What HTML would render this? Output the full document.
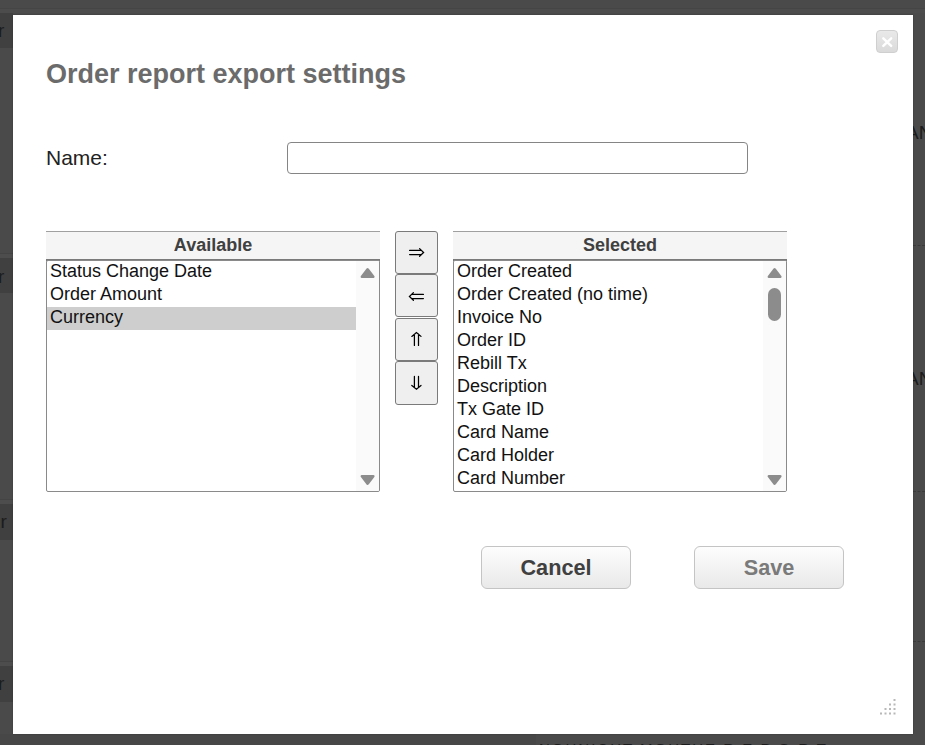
<!DOCTYPE html>
<html><head><meta charset="utf-8">
<style>
html,body{margin:0;padding:0;}
body{width:925px;height:745px;overflow:hidden;position:relative;background:#4a4a4a;font-family:"Liberation Sans",sans-serif;}
.abs{position:absolute;}
.bgt{font-size:19px;color:#1c1c1c;line-height:22px;white-space:nowrap;}
.band{position:absolute;left:0;width:13px;background:#404040;}
.bl{position:absolute;left:0;width:13px;height:1px;background:#444;}
.ls{position:absolute;left:0;width:13px;height:4px;background:#4d4d4d;}
.dlg{position:absolute;left:13px;top:15px;width:900px;height:719px;background:#fff;box-shadow:0 0 1.5px rgba(0,0,0,0.3);}
.title{position:absolute;left:46px;top:58.5px;font-size:27px;font-weight:bold;color:#6b6b6b;white-space:nowrap;line-height:31px;}
.lbl{position:absolute;left:46px;top:146px;font-size:21px;color:#222;line-height:23px;}
.inp{position:absolute;left:287px;top:142px;width:459px;height:30px;border:1px solid #858585;border-radius:4px;background:#fff;}
.hdr{position:absolute;top:231px;width:334px;height:27px;background:#f5f5f5;border-top:1px solid #a0a0a0;border-bottom:2px solid #7a7a7a;font-size:18px;font-weight:bold;color:#404040;text-align:center;line-height:27px;}
.list{position:absolute;top:260px;width:332px;height:230px;border:1px solid #8a8a8a;border-radius:2px;background:#fff;overflow:hidden;}
.item{position:absolute;left:3px;height:23px;font-size:18px;line-height:21px;color:#111;white-space:nowrap;}
.sb{position:absolute;right:0;top:0;width:23px;height:230px;background:#fafafa;}
.abtn{position:absolute;left:395px;width:41px;height:41px;border:1px solid #7a7a7a;border-radius:3px;background:#efefef;}
.btn{position:absolute;top:546px;width:148px;height:41px;border:1px solid #c4c4c4;border-radius:6px;background:linear-gradient(#fdfdfd,#e9e9e9);font-size:21.7px;font-weight:bold;text-align:center;line-height:42px;}
</style></head><body>
<div class="band" style="top:13px;height:35px;"></div>
<div class="band" style="top:258px;height:35px;"></div>
<div class="band" style="top:504px;height:36px;"></div>
<div class="band" style="top:666px;height:36px;"></div>

<div class="abs" style="left:0;top:8px;width:925px;height:1px;background:#454545;"></div><div class="abs" style="left:0;top:9px;width:925px;height:4px;background:#4c4c4c;"></div><div class="bl" style="top:253px;"></div><div class="ls" style="top:254px;"></div><div class="bl" style="top:499px;"></div><div class="ls" style="top:500px;"></div><div class="bl" style="top:661px;"></div><div class="ls" style="top:662px;"></div>
<div class="abs bgt" style="left:-2px;top:20px;">r</div>
<div class="abs bgt" style="left:-2px;top:266px;">r</div>
<div class="abs bgt" style="left:0.5px;top:511px;">r</div>
<div class="abs bgt" style="left:-2px;top:673px;">r</div>
<div class="abs bgt" style="left:906px;top:122px;">AN</div>
<div class="abs bgt" style="left:906px;top:368px;">AN</div>
<div class="abs" style="left:913px;top:245px;width:12px;height:0;border-top:1px dashed #3a3a3a;"></div>
<div class="abs" style="left:913px;top:491px;width:12px;height:0;border-top:1px dashed #3a3a3a;"></div>
<div class="abs" style="left:913px;top:641px;width:12px;height:0;border-top:1px dashed #3a3a3a;"></div>
<div class="abs" style="left:0;top:734px;width:536px;height:11px;background:#474747;"></div>
<div class="abs bgt" style="left:539px;top:737.5px;font-size:15px;letter-spacing:2px;">NOHNICHT MOHTHE R E P O R T</div>
<div class="dlg"></div>
<div class="title">Order report export settings</div>
<div class="lbl">Name:</div>
<div class="inp"></div>

<div class="hdr" style="left:46px;">Available</div>
<div class="list" style="left:46px;">
  <div class="item" style="top:0px;">Status Change Date</div>
  <div class="item" style="top:23px;">Order Amount</div>
  <div class="abs" style="left:0;top:46px;width:309px;height:23px;background:#cecece;"></div>
  <div class="item" style="top:46px;">Currency</div>
  <div class="sb"></div>
</div>

<div class="abtn" style="top:231px;"></div>
<div class="abtn" style="top:274px;"></div>
<div class="abtn" style="top:318px;"></div>
<div class="abtn" style="top:361px;height:42px;"></div>

<div class="hdr" style="left:453px;">Selected</div>
<div class="list" style="left:453px;">
  <div class="item" style="top:0px;">Order Created</div>
  <div class="item" style="top:23px;">Order Created (no time)</div>
  <div class="item" style="top:46px;">Invoice No</div>
  <div class="item" style="top:69px;">Order ID</div>
  <div class="item" style="top:92px;">Rebill Tx</div>
  <div class="item" style="top:115px;">Description</div>
  <div class="item" style="top:138px;">Tx Gate ID</div>
  <div class="item" style="top:161px;">Card Name</div>
  <div class="item" style="top:184px;">Card Holder</div>
  <div class="item" style="top:207px;">Card Number</div>
  <div class="sb"></div>
</div>

<div class="btn" style="left:481px;color:#404040;">Cancel</div>
<div class="btn" style="left:694px;color:#7a7a7a;">Save</div>

<div class="abs" style="left:876px;top:30px;width:20px;height:21px;border:1px solid #cfcfcf;border-radius:4px;background:linear-gradient(#e9e9e9,#dadada);"></div>

<svg class="abs" style="left:0;top:0;" width="925" height="745" viewBox="0 0 925 745">
 <g fill="#8c8c8c" stroke="#8c8c8c" stroke-width="2.6" stroke-linejoin="round">
  <path d="M367.6,269.4 L373.3,276.7 L361.9,276.7 Z"/>
  <path d="M367.6,483.6 L373.3,476.3 L361.9,476.3 Z"/>
  <path d="M774.6,269.4 L780.3,276.7 L768.9,276.7 Z"/>
  <path d="M774.6,483.6 L780.3,476.3 L768.9,476.3 Z"/>
 </g>
 <rect x="768" y="288" width="13" height="33" rx="6.5" fill="#8c8c8c"/>
 <g fill="none" stroke="#000" stroke-width="1.25" stroke-linecap="round" stroke-linejoin="miter">
  <path d="M409.6,250.4 H421 M409.6,254.5 H421 M419.6,248.6 L423.6,252.45 L419.6,256.3"/>
  <path d="M412,294.4 H423.4 M412,298.5 H423.4 M413.4,292.6 L409.4,296.45 L413.4,300.3"/>
  <path d="M414.4,334.2 V345.4 M418.5,334.2 V345.4 M411.8,336.4 L416.45,332.5 L421,336.4"/>
  <path d="M414.4,376.4 V387.6 M418.5,376.4 V387.6 M411.8,385.4 L416.45,389.2 L421,385.4"/>
 </g>
 <g stroke="#fff" stroke-width="2.4" stroke-linecap="round">
  <path d="M883.3,38.3 L891.2,45.9 M891.2,38.3 L883.3,45.9"/>
 </g>
 <g fill="#b8b8b8">
  <rect x="893.5" y="699" width="2" height="2"/>
  <rect x="889" y="703.5" width="2" height="2"/><rect x="893.5" y="703.5" width="2" height="2"/>
  <rect x="884.5" y="708" width="2" height="2"/><rect x="889" y="708" width="2" height="2"/><rect x="893.5" y="708" width="2" height="2"/>
  <rect x="880" y="712.5" width="2" height="2"/><rect x="884.5" y="712.5" width="2" height="2"/><rect x="889" y="712.5" width="2" height="2"/><rect x="893.5" y="712.5" width="2" height="2"/>
 </g>
</svg>
</body></html>
